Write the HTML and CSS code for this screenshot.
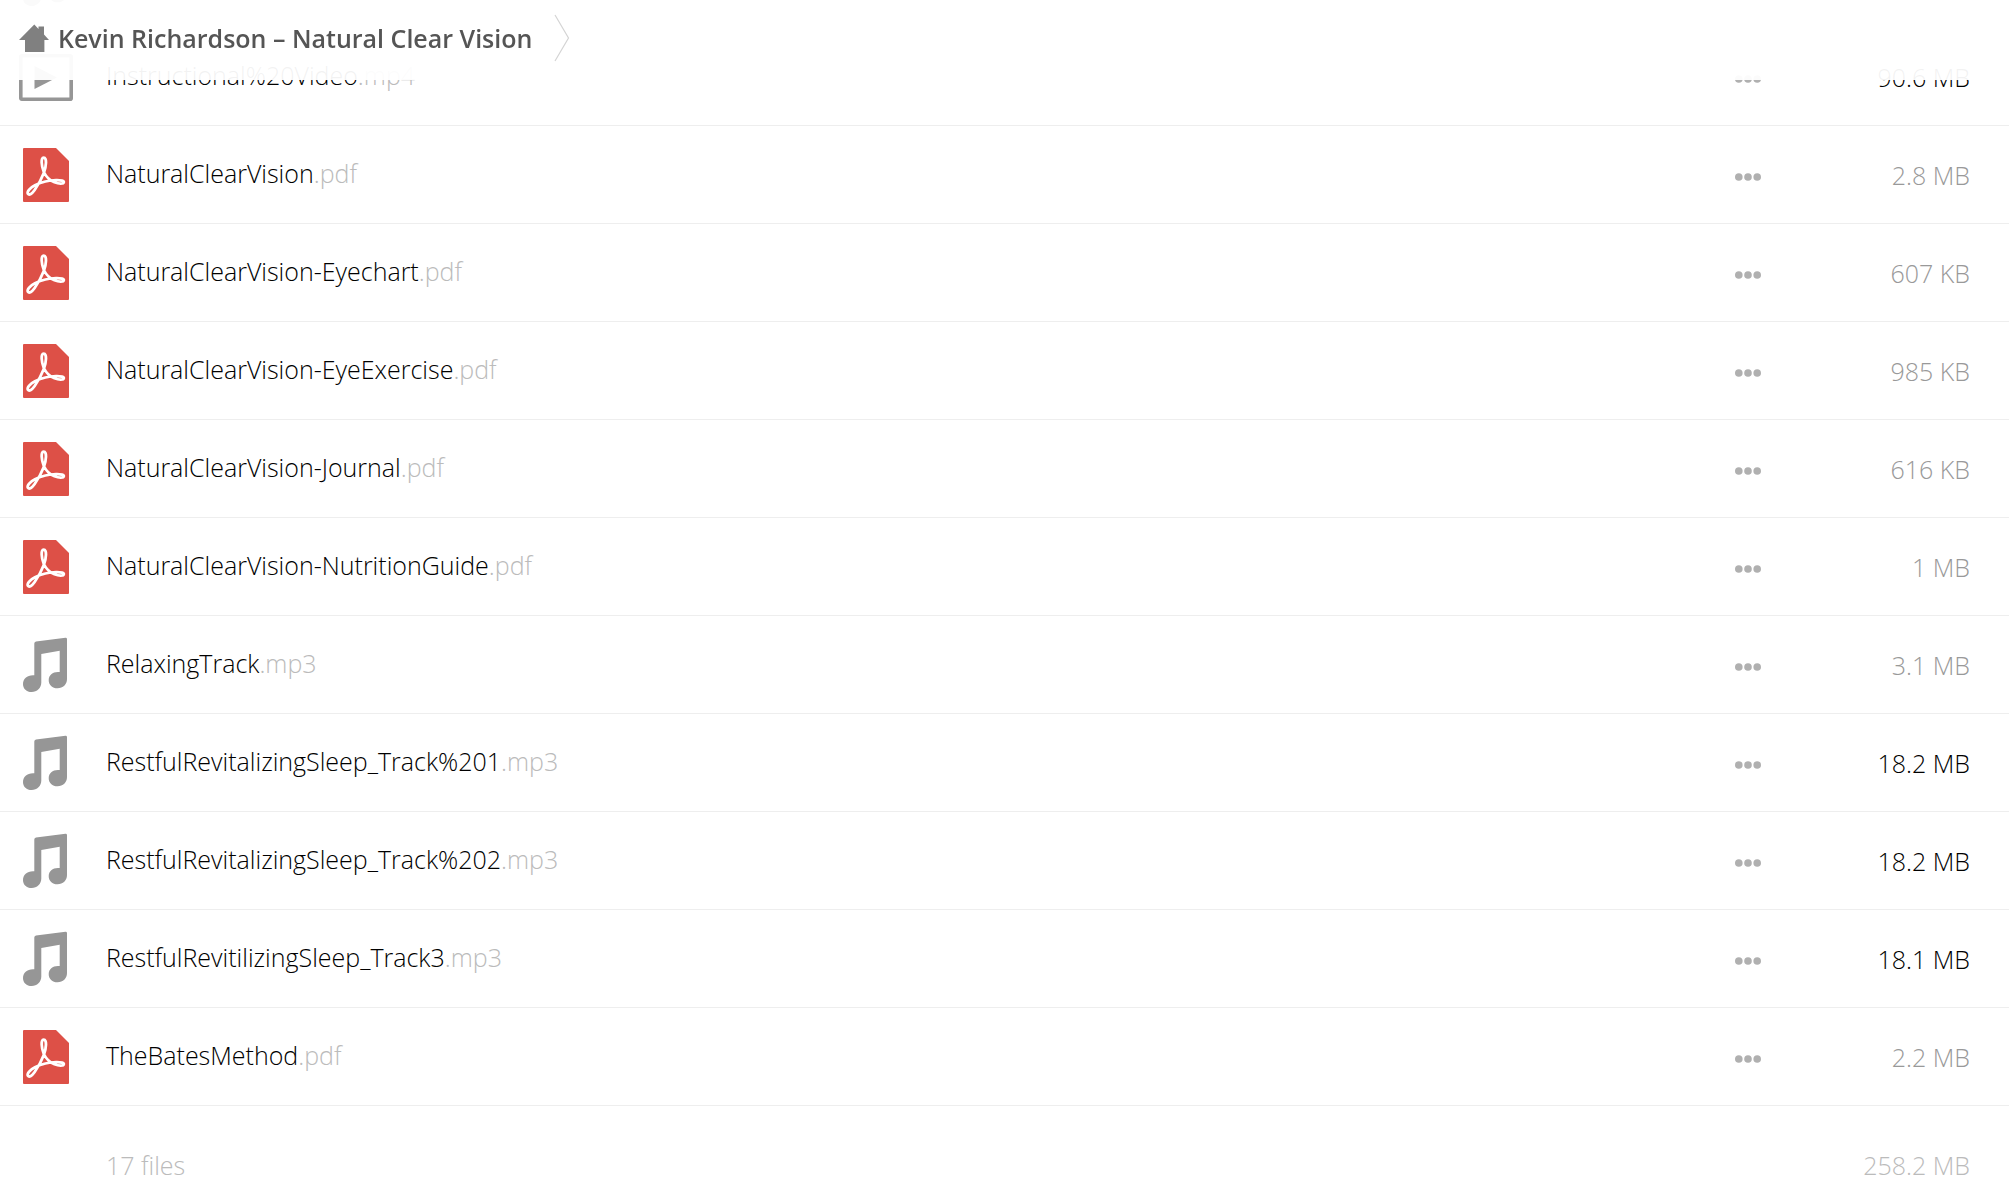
FILE: index.html
```html
<!DOCTYPE html>
<html lang="en">
<head>
  <meta charset="UTF-8">
  <meta name="viewport" content="width=device-width, initial-scale=1.0">
  <title>Kevin Richardson – Natural Clear Vision</title>
  <link rel="stylesheet" href="styles.css">
</head>
<body>
  <!-- shared icons -->
  <svg class="sprite" aria-hidden="true">
    <symbol id="icon-pdf" viewBox="0 0 56 56">
      <path fill="#dd5047" d="M6 1h32l13 13v40q0 1-1 1H6q-1 0-1-1V2q0-1 1-1z"/>
      <path fill="none" stroke="#fff" stroke-width="2.8" stroke-linejoin="round" d="M25.8 25C23.4 19 22.6 10.6 25.7 10.6C29 10.6 28.4 19 25.8 26C23.5 32 19.5 39 16.5 43.3C13.5 47.5 11 48.3 9.9 46.7C8.8 44.8 11.5 41 17 38.3C23 35.4 31 33.3 38 33.2C43.5 33.1 46 33.7 45.8 35.2C45.5 37 41 37 36.5 35.3C31.5 33.3 28 29.5 25.8 25z"/>
    </symbol>
    <symbol id="icon-music" viewBox="0 0 56 56">
      <path fill="#969696" d="M18 4.5L47.5.8Q49 .7 49 2.2V42C49 47.5 45 51.3 39.5 51.3C34.3 51.3 30.7 47.7 30.7 43.2C30.7 37.5 35.5 34.2 41.7 35V13.7L23.3 17V45.5C23.3 51 19 55 13.7 55C8.6 55 5 51.6 5 47.2C5 41.5 9.5 37.7 16.3 38.3V6.5Q16.3 4.8 18 4.5z"/>
    </symbol>
    <symbol id="icon-video" viewBox="0 0 56 56">
      <rect x="2.8" y="6.8" width="50.4" height="43.4" rx="1" fill="none" stroke="#969696" stroke-width="3.6"/>
      <path fill="#969696" d="M16.5 17L39 28.5L16.5 40z"/>
    </symbol>
    <symbol id="icon-dots" viewBox="0 0 26 8">
      <g fill="#b0b0b0">
        <circle cx="3.8" cy="4" r="3.8"/>
        <circle cx="13" cy="4" r="3.8"/>
        <circle cx="22.2" cy="4" r="3.8"/>
      </g>
    </symbol>
  </svg>

  <header class="topbar">
    <a class="crumb" href="#">
      <svg class="home" viewBox="0 0 30 28" aria-hidden="true">
        <path fill="#808080" d="M0 16L15.3.6L19.5 5V2.5H25V10.5L30 16H25.4V28H6V16z"/>
      </svg>
      Kevin Richardson – Natural Clear Vision
    </a>
    <svg class="chevron" viewBox="0 0 16 48" aria-hidden="true">
      <path fill="none" stroke="#d4d4d4" stroke-width="1.2" d="M1 1L14.5 24L1 47"/>
    </svg>
  </header>

  <table class="files">
    <tbody>
      <tr>
        <td class="icon"><svg><use href="#icon-music"/></svg></td>
        <td class="name"></td>
        <td class="more"></td>
        <td class="size"></td>
      </tr>
      <tr>
        <td class="icon"><svg><use href="#icon-video"/></svg></td>
        <td class="name"><a href="#">Instructional%20Video<span class="ext">.mp4</span></a></td>
        <td class="more"><button type="button" aria-label="More actions"><svg><use href="#icon-dots"/></svg></button></td>
        <td class="size large">90.6 MB</td>
      </tr>
      <tr>
        <td class="icon"><svg><use href="#icon-pdf"/></svg></td>
        <td class="name"><a href="#">NaturalClearVision<span class="ext">.pdf</span></a></td>
        <td class="more"><button type="button" aria-label="More actions"><svg><use href="#icon-dots"/></svg></button></td>
        <td class="size">2.8 MB</td>
      </tr>
      <tr>
        <td class="icon"><svg><use href="#icon-pdf"/></svg></td>
        <td class="name"><a href="#">NaturalClearVision-Eyechart<span class="ext">.pdf</span></a></td>
        <td class="more"><button type="button" aria-label="More actions"><svg><use href="#icon-dots"/></svg></button></td>
        <td class="size">607 KB</td>
      </tr>
      <tr>
        <td class="icon"><svg><use href="#icon-pdf"/></svg></td>
        <td class="name"><a href="#">NaturalClearVision-EyeExercise<span class="ext">.pdf</span></a></td>
        <td class="more"><button type="button" aria-label="More actions"><svg><use href="#icon-dots"/></svg></button></td>
        <td class="size">985 KB</td>
      </tr>
      <tr>
        <td class="icon"><svg><use href="#icon-pdf"/></svg></td>
        <td class="name"><a href="#">NaturalClearVision-Journal<span class="ext">.pdf</span></a></td>
        <td class="more"><button type="button" aria-label="More actions"><svg><use href="#icon-dots"/></svg></button></td>
        <td class="size">616 KB</td>
      </tr>
      <tr>
        <td class="icon"><svg><use href="#icon-pdf"/></svg></td>
        <td class="name"><a href="#">NaturalClearVision-NutritionGuide<span class="ext">.pdf</span></a></td>
        <td class="more"><button type="button" aria-label="More actions"><svg><use href="#icon-dots"/></svg></button></td>
        <td class="size">1 MB</td>
      </tr>
      <tr>
        <td class="icon"><svg><use href="#icon-music"/></svg></td>
        <td class="name"><a href="#">RelaxingTrack<span class="ext">.mp3</span></a></td>
        <td class="more"><button type="button" aria-label="More actions"><svg><use href="#icon-dots"/></svg></button></td>
        <td class="size">3.1 MB</td>
      </tr>
      <tr>
        <td class="icon"><svg><use href="#icon-music"/></svg></td>
        <td class="name"><a href="#">RestfulRevitalizingSleep_Track%201<span class="ext">.mp3</span></a></td>
        <td class="more"><button type="button" aria-label="More actions"><svg><use href="#icon-dots"/></svg></button></td>
        <td class="size large">18.2 MB</td>
      </tr>
      <tr>
        <td class="icon"><svg><use href="#icon-music"/></svg></td>
        <td class="name"><a href="#">RestfulRevitalizingSleep_Track%202<span class="ext">.mp3</span></a></td>
        <td class="more"><button type="button" aria-label="More actions"><svg><use href="#icon-dots"/></svg></button></td>
        <td class="size large">18.2 MB</td>
      </tr>
      <tr>
        <td class="icon"><svg><use href="#icon-music"/></svg></td>
        <td class="name"><a href="#">RestfulRevitilizingSleep_Track3<span class="ext">.mp3</span></a></td>
        <td class="more"><button type="button" aria-label="More actions"><svg><use href="#icon-dots"/></svg></button></td>
        <td class="size large">18.1 MB</td>
      </tr>
      <tr>
        <td class="icon"><svg><use href="#icon-pdf"/></svg></td>
        <td class="name"><a href="#">TheBatesMethod<span class="ext">.pdf</span></a></td>
        <td class="more"><button type="button" aria-label="More actions"><svg><use href="#icon-dots"/></svg></button></td>
        <td class="size">2.2 MB</td>
      </tr>
    </tbody>
    <tfoot>
      <tr>
        <td></td>
        <td class="total">17 files</td>
        <td></td>
        <td class="total size">258.2 MB</td>
      </tr>
    </tfoot>
  </table>
</body>
</html>
```

FILE: styles.css
```css
body {
  margin: 0;
  background-color: #fff;
  color: #000;
  font-family: "Open Sans", "Noto Sans", sans-serif;
  font-size: 25px;
  font-weight: 300;
  line-height: 36px;
}

a {
  color: inherit;
  text-decoration: none;
}

svg {
  display: block;
}

.sprite {
  position: absolute;
  width: 0;
  height: 0;
}

/* breadcrumb bar, the list scrolls under it */
.topbar {
  position: fixed;
  top: 0;
  left: 0;
  right: 0;
  z-index: 1;
  box-sizing: border-box;
  height: 80px;
  padding: 14px 19px 18px;
  display: flex;
  align-items: center;
  gap: 22px;
  background-color: rgba(255, 255, 255, 0.95);
}

.crumb {
  display: flex;
  align-items: center;
  gap: 9px;
  color: #555;
  font-weight: 600;
}

.home {
  width: 30px;
  height: 28px;
}

.chevron {
  width: 16px;
  height: 48px;
}

/* file list */
.files {
  width: 100%;
  margin-top: -70px;
  border-collapse: separate;
  border-spacing: 0;
}

.files td {
  padding: 0;
}

.files tbody td {
  height: 97px;
  border-bottom: 1px solid #eee;
}

.files .icon {
  width: 88px;
  padding-left: 18px;
}

.icon svg {
  width: 56px;
  height: 56px;
}

.files tbody .name {
  height: 94px;
  padding-bottom: 3px;
}

.ext {
  color: #bbb;
}

.more {
  width: 60px;
}

.more button {
  display: block;
  padding: 10px 0 6px;
  border: none;
  background: none;
  cursor: pointer;
}

.more svg {
  width: 26px;
  height: 8px;
}

.files .size {
  width: 175px;
  padding-right: 39px;
  color: #999;
  text-align: right;
}

.files .large {
  color: #000;
}

.files tfoot td {
  padding-top: 41px;
  padding-bottom: 4px;
}

.files .total {
  color: #bbb;
}
```
